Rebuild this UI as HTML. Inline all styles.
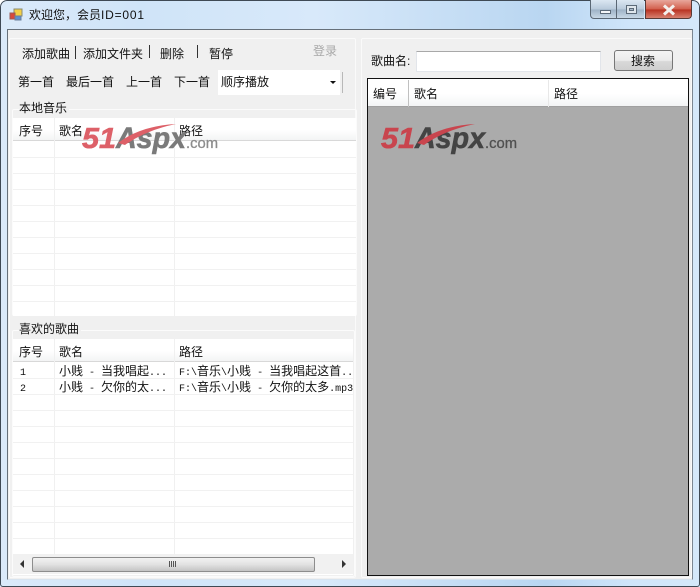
<!DOCTYPE html>
<html lang="zh">
<head>
<meta charset="utf-8">
<style>
html,body{margin:0;padding:0;width:700px;height:587px;overflow:hidden;background:#fff}
*{box-sizing:border-box}
#w{position:relative;width:700px;height:587px;overflow:hidden;font:12px/16px "Liberation Sans","WenQuanYi Zen Hei","Noto Sans CJK SC",sans-serif;color:#111;
background:linear-gradient(90deg,#dbeafa 0,#cfe4f8 20%,#d8e9fa 45%,#b9d6f1 78%,#cfe5fa 90%,#d5e8fa 100%);border-radius:7px 7px 0 0}
.a{position:absolute}
.t{position:absolute;white-space:nowrap}
.h{position:absolute;background:#f1f1f1;height:1px}
.v{position:absolute;background:#f0f0f0;width:1px}
.hd{position:absolute;background:linear-gradient(#fff 0,#fff 55%,#f3f4f5 100%)}
.r{position:absolute;white-space:pre;overflow:hidden;font-family:"WenQuanYi Zen Hei","Noto Sans CJK SC",sans-serif;font-size:12px}
.r b{font:normal 10px/16px "Liberation Mono",monospace}
</style>
</head>
<body>
<div id="w">
<div class="a" style="left:0;top:0;width:700px;height:587px;border:1px solid #3f4a55;border-radius:7px 7px 3px 3px"></div>
<!-- title icon -->
<svg class="a" style="left:9px;top:8px" width="14" height="14" viewBox="0 0 14 14">
<rect x="5" y="1" width="8" height="7" fill="#f3cf45" stroke="#8a8a70"/>
<rect x="1" y="5" width="5" height="6" fill="#d9483b" stroke="#9a5a55"/>
<rect x="6" y="8" width="6" height="4" fill="#5d8fd0" stroke="#6a7f9a"/>
</svg>
<div class="t" style="left:29px;top:7px;font-size:12px;color:#111">欢迎您，会员<span style="letter-spacing:.8px">ID=001</span></div>
<!-- window buttons -->
<div class="a" style="left:590px;top:0;width:27px;height:19px;background:linear-gradient(#dbe7f2,#b9cadb 50%,#9fb3c7 55%,#c8d8e6);border:1px solid #5a6774;border-top:0;border-radius:0 0 0 4px"></div>
<div class="a" style="left:600px;top:10px;width:11px;height:4px;background:#f4f6f8;border:1px solid #5c6a78"></div>
<div class="a" style="left:617px;top:0;width:27px;height:19px;background:linear-gradient(#dbe7f2,#b9cadb 50%,#9fb3c7 55%,#c8d8e6);border:1px solid #5a6774;border-width:0 0 1px 0"></div>
<div class="a" style="left:626px;top:5px;width:11px;height:9px;background:#dfe6ec;border:1px solid #5c6a78"></div>
<div class="a" style="left:629px;top:8px;width:5px;height:3px;background:#a8b8c8;border:1px solid #5c6a78"></div>
<div class="a" style="left:645px;top:0;width:47px;height:19px;background:linear-gradient(#e8a79c,#d2604e 50%,#b93222 55%,#d8806f);border:1px solid #5a3a36;border-top:0;border-radius:0 0 4px 0"></div>
<svg class="a" style="left:662px;top:4px" width="14" height="12" viewBox="0 0 14 12"><path d="M2 1.5 L12 10.5 M12 1.5 L2 10.5" stroke="#f4efec" stroke-width="3"/></svg>
<!-- client -->
<div class="a" style="left:7px;top:29px;width:686px;height:551px;background:#f0f0f0;border:1px solid #66707a;border-bottom-color:#d8e4ef;border-right-color:#7c8792"></div>
<div class="a" style="left:9px;top:38px;width:347px;height:540px;border:1px solid #fafafa;border-radius:2px"></div>
<div class="a" style="left:361px;top:38px;width:331px;height:540px;border:1px solid #fafafa;border-radius:2px"></div>

<!-- toolbar 1 -->
<div class="t" style="left:22px;top:46px">添加歌曲</div>
<div class="a" style="left:75px;top:46px;width:1px;height:13px;background:#333"></div>
<div class="t" style="left:83px;top:46px">添加文件夹</div>
<div class="a" style="left:149px;top:45px;width:1px;height:13px;background:#333"></div>
<div class="t" style="left:160px;top:46px">删除</div>
<div class="a" style="left:197px;top:45px;width:1px;height:13px;background:#333"></div>
<div class="t" style="left:209px;top:46px">暂停</div>
<div class="t" style="left:313px;top:43px;color:#a8a8a8">登录</div>
<!-- toolbar 2 -->
<div class="t" style="left:18px;top:74px">第一首</div>
<div class="t" style="left:66px;top:74px">最后一首</div>
<div class="t" style="left:126px;top:74px">上一首</div>
<div class="t" style="left:174px;top:74px">下一首</div>
<div class="a" style="left:218px;top:70px;width:122px;height:25px;background:#fff"></div>
<div class="t" style="left:221px;top:74px">顺序播放</div>
<div class="a" style="left:330px;top:81px;width:0;height:0;border:3px solid transparent;border-top:3px solid #111"></div>
<div class="a" style="left:342px;top:72px;width:1px;height:21px;background:#b8b8b8"></div>

<!-- group 1 -->
<div class="a" style="left:12px;top:109px;width:345px;height:207px;border:1px solid #fbfbfb;border-radius:2px"></div>
<div class="t" style="left:19px;top:100px;background:#f0f0f0;padding-right:2px">本地音乐</div>
<div class="a" style="left:13px;top:118px;width:343px;height:198px;background:#fff"></div>
<div class="hd" style="left:13px;top:118px;width:343px;height:23px;border-bottom:1px solid #d8d8d8"></div>
<div class="v" style="left:54px;top:118px;height:198px"></div>
<div class="v" style="left:174px;top:118px;height:198px"></div>
<div class="h" style="left:13px;top:157px;width:343px"></div>
<div class="h" style="left:13px;top:173px;width:343px"></div>
<div class="h" style="left:13px;top:189px;width:343px"></div>
<div class="h" style="left:13px;top:205px;width:343px"></div>
<div class="h" style="left:13px;top:221px;width:343px"></div>
<div class="h" style="left:13px;top:237px;width:343px"></div>
<div class="h" style="left:13px;top:253px;width:343px"></div>
<div class="h" style="left:13px;top:269px;width:343px"></div>
<div class="h" style="left:13px;top:285px;width:343px"></div>
<div class="h" style="left:13px;top:301px;width:343px"></div>
<div class="t" style="left:19px;top:123px">序号</div>
<div class="t" style="left:59px;top:123px">歌名</div>
<div class="t" style="left:179px;top:123px">路径</div>

<!-- group 2 -->
<div class="a" style="left:12px;top:330px;width:343px;height:247px;border:1px solid #fbfbfb;border-radius:2px"></div>
<div class="t" style="left:19px;top:321px;background:#f0f0f0;padding-right:2px">喜欢的歌曲</div>
<div class="a" style="left:13px;top:339px;width:340px;height:236px;background:#fff"></div>
<div class="hd" style="left:13px;top:339px;width:340px;height:23px;border-bottom:1px solid #d8d8d8"></div>
<div class="v" style="left:54px;top:339px;height:217px"></div>
<div class="v" style="left:174px;top:339px;height:217px"></div>
<div class="h" style="left:13px;top:378px;width:340px"></div>
<div class="h" style="left:13px;top:394px;width:340px"></div>
<div class="h" style="left:13px;top:410px;width:340px"></div>
<div class="h" style="left:13px;top:426px;width:340px"></div>
<div class="h" style="left:13px;top:442px;width:340px"></div>
<div class="h" style="left:13px;top:458px;width:340px"></div>
<div class="h" style="left:13px;top:474px;width:340px"></div>
<div class="h" style="left:13px;top:490px;width:340px"></div>
<div class="h" style="left:13px;top:506px;width:340px"></div>
<div class="h" style="left:13px;top:522px;width:340px"></div>
<div class="h" style="left:13px;top:538px;width:340px"></div>
<div class="h" style="left:13px;top:554px;width:340px"></div>
<div class="t" style="left:19px;top:344px">序号</div>
<div class="t" style="left:59px;top:344px">歌名</div>
<div class="t" style="left:179px;top:344px">路径</div>
<div class="r" style="left:20px;top:363px"><b>1</b></div>
<div class="r" style="left:20px;top:379px"><b>2</b></div>
<div class="r" style="left:59px;top:363px;width:112px">小贱<b> - </b>当我唱起<b>...</b></div>
<div class="r" style="left:59px;top:379px;width:112px">小贱<b> - </b>欠你的太<b>...</b></div>
<div class="r" style="left:179px;top:363px;width:174px"><b>F:\</b>音乐<b>\</b>小贱<b> - </b>当我唱起这首<b>..</b></div>
<div class="r" style="left:179px;top:379px;width:174px"><b>F:\</b>音乐<b>\</b>小贱<b> - </b>欠你的太多<b>.mp3</b></div>

<!-- scrollbar -->
<div class="a" style="left:13px;top:555px;width:340px;height:19px;background:#f1f1f1"></div>
<div class="a" style="left:32px;top:557px;width:283px;height:15px;background:linear-gradient(#f2f2f2,#e2e2e2 50%,#c4c4c4);border:1px solid #8d8d8d;border-radius:2px"></div>
<div class="a" style="left:169px;top:561px;width:1px;height:6px;background:#555"></div>
<div class="a" style="left:171px;top:561px;width:1px;height:6px;background:#555"></div>
<div class="a" style="left:173px;top:561px;width:1px;height:6px;background:#555"></div>
<div class="a" style="left:175px;top:561px;width:1px;height:6px;background:#555"></div>
<svg class="a" style="left:19px;top:560px" width="6" height="8"><path d="M5 0V8L1 4Z" fill="#333"/></svg>
<svg class="a" style="left:341px;top:560px" width="6" height="8"><path d="M1 0V8L5 4Z" fill="#333"/></svg>

<!-- right panel -->
<div class="t" style="left:371px;top:53px">歌曲名:</div>
<div class="a" style="left:416px;top:51px;width:185px;height:21px;background:#fff;border:1px solid #e2e5ea;border-top-color:#a8a8a8"></div>
<div class="a" style="left:614px;top:50px;width:59px;height:21px;background:linear-gradient(#f4f4f4,#ebebeb 50%,#d8d8d8 55%,#cfcfcf);border:1px solid #777;border-radius:3px"></div>
<div class="t" style="left:631px;top:53px">搜索</div>
<div class="a" style="left:367px;top:78px;width:322px;height:498px;background:#ababab;border:1px solid #111"></div>
<div class="hd" style="left:368px;top:79px;width:320px;height:28px;border-bottom:1px solid #a0a0a0"></div>
<div class="a" style="left:408px;top:80px;width:1px;height:27px;background:#c0c0c0"></div>
<div class="a" style="left:548px;top:80px;width:1px;height:27px;background:#e8e8e8"></div>
<div class="t" style="left:373px;top:86px">编号</div>
<div class="t" style="left:414px;top:86px">歌名</div>
<div class="t" style="left:554px;top:86px">路径</div>

<!-- watermarks -->
<svg class="a" style="left:0;top:0" width="700" height="587" font-family="Liberation Sans, sans-serif">
<text x="82" y="148" font-size="29" font-weight="bold" font-style="italic" fill="#dd6068" stroke="#dd6068" stroke-width=".6" textLength="34" lengthAdjust="spacingAndGlyphs">51</text>
<text x="116" y="148" font-size="30" font-weight="bold" font-style="italic" fill="#7a7a7a" stroke="#7a7a7a" stroke-width=".6" textLength="70" lengthAdjust="spacingAndGlyphs">Aspx</text>
<text x="186" y="148" font-size="15" fill="#8c8c8c" stroke="#8c8c8c" stroke-width=".3" textLength="32" lengthAdjust="spacingAndGlyphs">.com</text>
<path d="M118 143 Q140 126 176 124 Q146 130 125 145Z" fill="#dd6068"/>
<text x="381" y="148" font-size="29" font-weight="bold" font-style="italic" fill="#c9454e" stroke="#c9454e" stroke-width=".6" textLength="34" lengthAdjust="spacingAndGlyphs">51</text>
<text x="415" y="148" font-size="30" font-weight="bold" font-style="italic" fill="#444" stroke="#444" stroke-width=".6" textLength="70" lengthAdjust="spacingAndGlyphs">Aspx</text>
<text x="485" y="148" font-size="15" fill="#505050" stroke="#505050" stroke-width=".3" textLength="32" lengthAdjust="spacingAndGlyphs">.com</text>
<path d="M417 143 Q439 126 475 124 Q445 130 424 145Z" fill="#c9454e"/>
</svg>
</div>
</body>
</html>
